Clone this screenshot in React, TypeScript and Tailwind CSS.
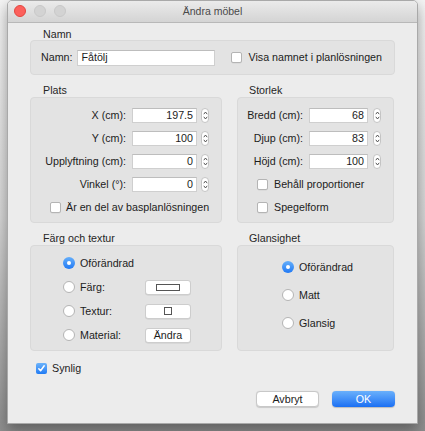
import React from 'react';

const FONT = "font-['Liberation_Sans',Arial,sans-serif]";

const Checkbox: React.FC<{ checked?: boolean }> = ({ checked }) =>
  checked ? (
    <span className="flex h-[11px] w-[11px] shrink-0 items-center justify-center rounded-[2px] bg-gradient-to-b from-[#6cb3fa] to-[#1f7bf4]">
      <svg width="9" height="9" viewBox="0 0 9 9">
        <path d="M1.8 4.8 L3.6 6.8 L7.2 1.8" fill="none" stroke="#fff" strokeWidth="1.5" strokeLinecap="round" strokeLinejoin="round" />
      </svg>
    </span>
  ) : (
    <span className="h-[11px] w-[11px] shrink-0 rounded-[2px] border border-[#b4b4b4] bg-white shadow-[0_0.5px_0_rgba(0,0,0,0.08)]" />
  );

const Radio: React.FC<{ checked?: boolean }> = ({ checked }) =>
  checked ? (
    <span className="flex h-[12px] w-[12px] shrink-0 items-center justify-center rounded-full bg-gradient-to-b from-[#64aefa] to-[#1f79f4]">
      <span className="h-[4px] w-[4px] rounded-full bg-white" />
    </span>
  ) : (
    <span className="h-[12px] w-[12px] shrink-0 rounded-full border border-[#b4b4b4] bg-white" />
  );

const Stepper = () => (
  <span className="flex h-[15px] w-[8px] shrink-0 flex-col items-center justify-center gap-[1px] rounded-[4px] border border-[#c4c4c4] bg-white">
    <svg width="5" height="4" viewBox="0 0 5 4">
      <path d="M0.8 3.2 L2.5 1 L4.2 3.2" fill="none" stroke="#444" strokeWidth="0.9" />
    </svg>
    <svg width="5" height="4" viewBox="0 0 5 4">
      <path d="M0.8 0.8 L2.5 3 L4.2 0.8" fill="none" stroke="#444" strokeWidth="0.9" />
    </svg>
  </span>
);

const NumField: React.FC<{ value: string; w: string }> = ({ value, w }) => (
  <span className={`flex h-[15px] ${w} items-center justify-end border border-[#cfcfcf] border-t-[#bdbdbd] bg-white pr-[3px] leading-none`}>
    {value}
  </span>
);

const SectionLabel: React.FC<{ text: string; pl: string }> = ({ text, pl }) => (
  <div className={`h-[12px] ${pl} text-[10.7px] leading-[12px] text-[#262626]`}>{text}</div>
);

const Panel: React.FC<{ className?: string; children: React.ReactNode }> = ({ className = '', children }) => (
  <div className={`rounded-[4px] border border-[#d9d9d9] bg-[#e3e3e3] ${className}`}>{children}</div>
);

const SmallButton: React.FC<{ children: React.ReactNode }> = ({ children }) => (
  <span className="flex h-[15px] w-[46px] items-center justify-center rounded-[3px] border border-[#cdcdcd] bg-white shadow-[0_0.5px_0_rgba(0,0,0,0.1)]">
    {children}
  </span>
);

export default function App() {
  const plats = [
    ['X (cm):', '197.5'],
    ['Y (cm):', '100'],
    ['Upplyftning (cm):', '0'],
    ['Vinkel (°):', '0'],
  ];
  const storlek = [
    ['Bredd (cm):', '68'],
    ['Djup (cm):', '83'],
    ['Höjd (cm):', '100'],
  ];

  return (
    <div className={`h-[431px] w-[425px] overflow-hidden bg-gradient-to-b from-[#f4f4f4] via-[#d6d6d6] to-[#8e8e8e] ${FONT} text-[10.7px] text-[#1c1c1c]`}>
      <div className="ml-[7px] flex h-[424px] w-[411px] flex-col overflow-hidden rounded-t-[5px] border border-[#a9a9a9] bg-[#ececec] shadow-[0_6px_14px_rgba(0,0,0,0.35)]">
        {/* title bar */}
        <div className="relative flex h-[22px] shrink-0 items-center justify-center border-b border-[#b8b8b8] bg-gradient-to-b from-[#ebebeb] to-[#d4d4d4]">
          <div className="absolute left-[6px] top-[4px] flex gap-[8px]">
            <span className="h-[12px] w-[12px] rounded-full border border-[#e2463f] bg-[#fc605c]" />
            <span className="h-[12px] w-[12px] rounded-full border border-[#c8c8c8] bg-[#d3d3d3]" />
            <span className="h-[12px] w-[12px] rounded-full border border-[#c8c8c8] bg-[#d3d3d3]" />
          </div>
          <span className="text-[10.5px] text-[#4a4a4a]">Ändra möbel</span>
        </div>

        <div className="flex flex-col px-[22px]">
          {/* Namn */}
          <div className="mt-[5px]">
            <SectionLabel text="Namn" pl="pl-[13px]" />
          </div>
          <Panel className="flex h-[35px] items-center">
            <span className="ml-[10px]">Namn:</span>
            <span className="ml-[5px] flex h-[16px] w-[138px] items-center border border-[#cfcfcf] border-t-[#bdbdbd] bg-white pl-[3px]">
              Fåtölj
            </span>
            <span className="ml-[16px] flex items-center gap-[6px]">
              <Checkbox />
              Visa namnet i planlösningen
            </span>
          </Panel>

          {/* Plats / Storlek */}
          <div className="mt-[9px] flex gap-[15px]">
            <div className="w-[192px]">
              <SectionLabel text="Plats" pl="pl-[13px]" />
              <Panel className="mt-[1px] flex h-[126px] flex-col gap-[7px] pt-[9px]">
                {plats.map(([l, v]) => (
                  <div key={l} className="flex h-[16px] items-center">
                    <span className="w-[95px] text-right">{l}</span>
                    <span className="ml-[6px]">
                      <NumField value={v} w="w-[65px]" />
                    </span>
                    <span className="ml-[4px]">
                      <Stepper />
                    </span>
                  </div>
                ))}
                <div className="flex h-[16px] items-center gap-[5px] pl-[19px]">
                  <Checkbox />
                  Är en del av basplanlösningen
                </div>
              </Panel>
            </div>
            <div className="w-[157px]">
              <SectionLabel text="Storlek" pl="pl-[12px]" />
              <Panel className="mt-[1px] flex h-[126px] flex-col gap-[7px] pt-[9px]">
                {storlek.map(([l, v]) => (
                  <div key={l} className="flex h-[16px] items-center">
                    <span className="w-[65px] text-right">{l}</span>
                    <span className="ml-[6px]">
                      <NumField value={v} w="w-[59px]" />
                    </span>
                    <span className="ml-[5px]">
                      <Stepper />
                    </span>
                  </div>
                ))}
                <div className="flex h-[16px] items-center gap-[6px] pl-[19px]">
                  <Checkbox />
                  Behåll proportioner
                </div>
                <div className="flex h-[16px] items-center gap-[6px] pl-[19px]">
                  <Checkbox />
                  Spegelform
                </div>
              </Panel>
            </div>
          </div>

          {/* Färg / Glansighet */}
          <div className="mt-[9px] flex gap-[15px]">
            <div className="w-[192px]">
              <SectionLabel text="Färg och textur" pl="pl-[13px]" />
              <Panel className="mt-[1px] flex h-[106px] flex-col gap-[8px] pt-[9px]">
                <div className="flex h-[16px] items-center gap-[5px] pl-[32px]">
                  <Radio checked />
                  Oförändrad
                </div>
                <div className="flex h-[16px] items-center pl-[32px]">
                  <Radio />
                  <span className="ml-[5px] w-[65px]">Färg:</span>
                  <SmallButton>
                    <span className="h-[7px] w-[24px] border border-[#555]" />
                  </SmallButton>
                </div>
                <div className="flex h-[16px] items-center pl-[32px]">
                  <Radio />
                  <span className="ml-[5px] w-[65px]">Textur:</span>
                  <SmallButton>
                    <span className="h-[8px] w-[8px] border border-[#555]" />
                  </SmallButton>
                </div>
                <div className="flex h-[16px] items-center pl-[32px]">
                  <Radio />
                  <span className="ml-[5px] w-[65px]">Material:</span>
                  <SmallButton>Ändra</SmallButton>
                </div>
              </Panel>
            </div>
            <div className="w-[157px]">
              <SectionLabel text="Glansighet" pl="pl-[12px]" />
              <Panel className="mt-[1px] flex h-[106px] flex-col gap-[12px] pt-[13px]">
                {['Oförändrad', 'Matt', 'Glansig'].map((t, i) => (
                  <div key={t} className="flex h-[16px] items-center gap-[5px] pl-[44px]">
                    <Radio checked={i === 0} />
                    {t}
                  </div>
                ))}
              </Panel>
            </div>
          </div>

          {/* Synlig */}
          <div className="mt-[11px] flex h-[13px] items-center gap-[5px] pl-[6px]">
            <Checkbox checked />
            Synlig
          </div>

          {/* buttons */}
          <div className="mt-[16px] flex justify-end gap-[13px]">
            <span className="flex h-[16px] w-[63px] items-center justify-center rounded-[4px] border border-[#c8c8c8] bg-white shadow-[0_0.5px_1px_rgba(0,0,0,0.15)]">
              Avbryt
            </span>
            <span className="flex h-[16px] w-[63px] items-center justify-center rounded-[4px] bg-gradient-to-b from-[#6ab0fb] to-[#1a6ff3] text-white shadow-[0_0.5px_1px_rgba(0,0,0,0.2)]">
              OK
            </span>
          </div>
        </div>
      </div>
    </div>
  );
}
